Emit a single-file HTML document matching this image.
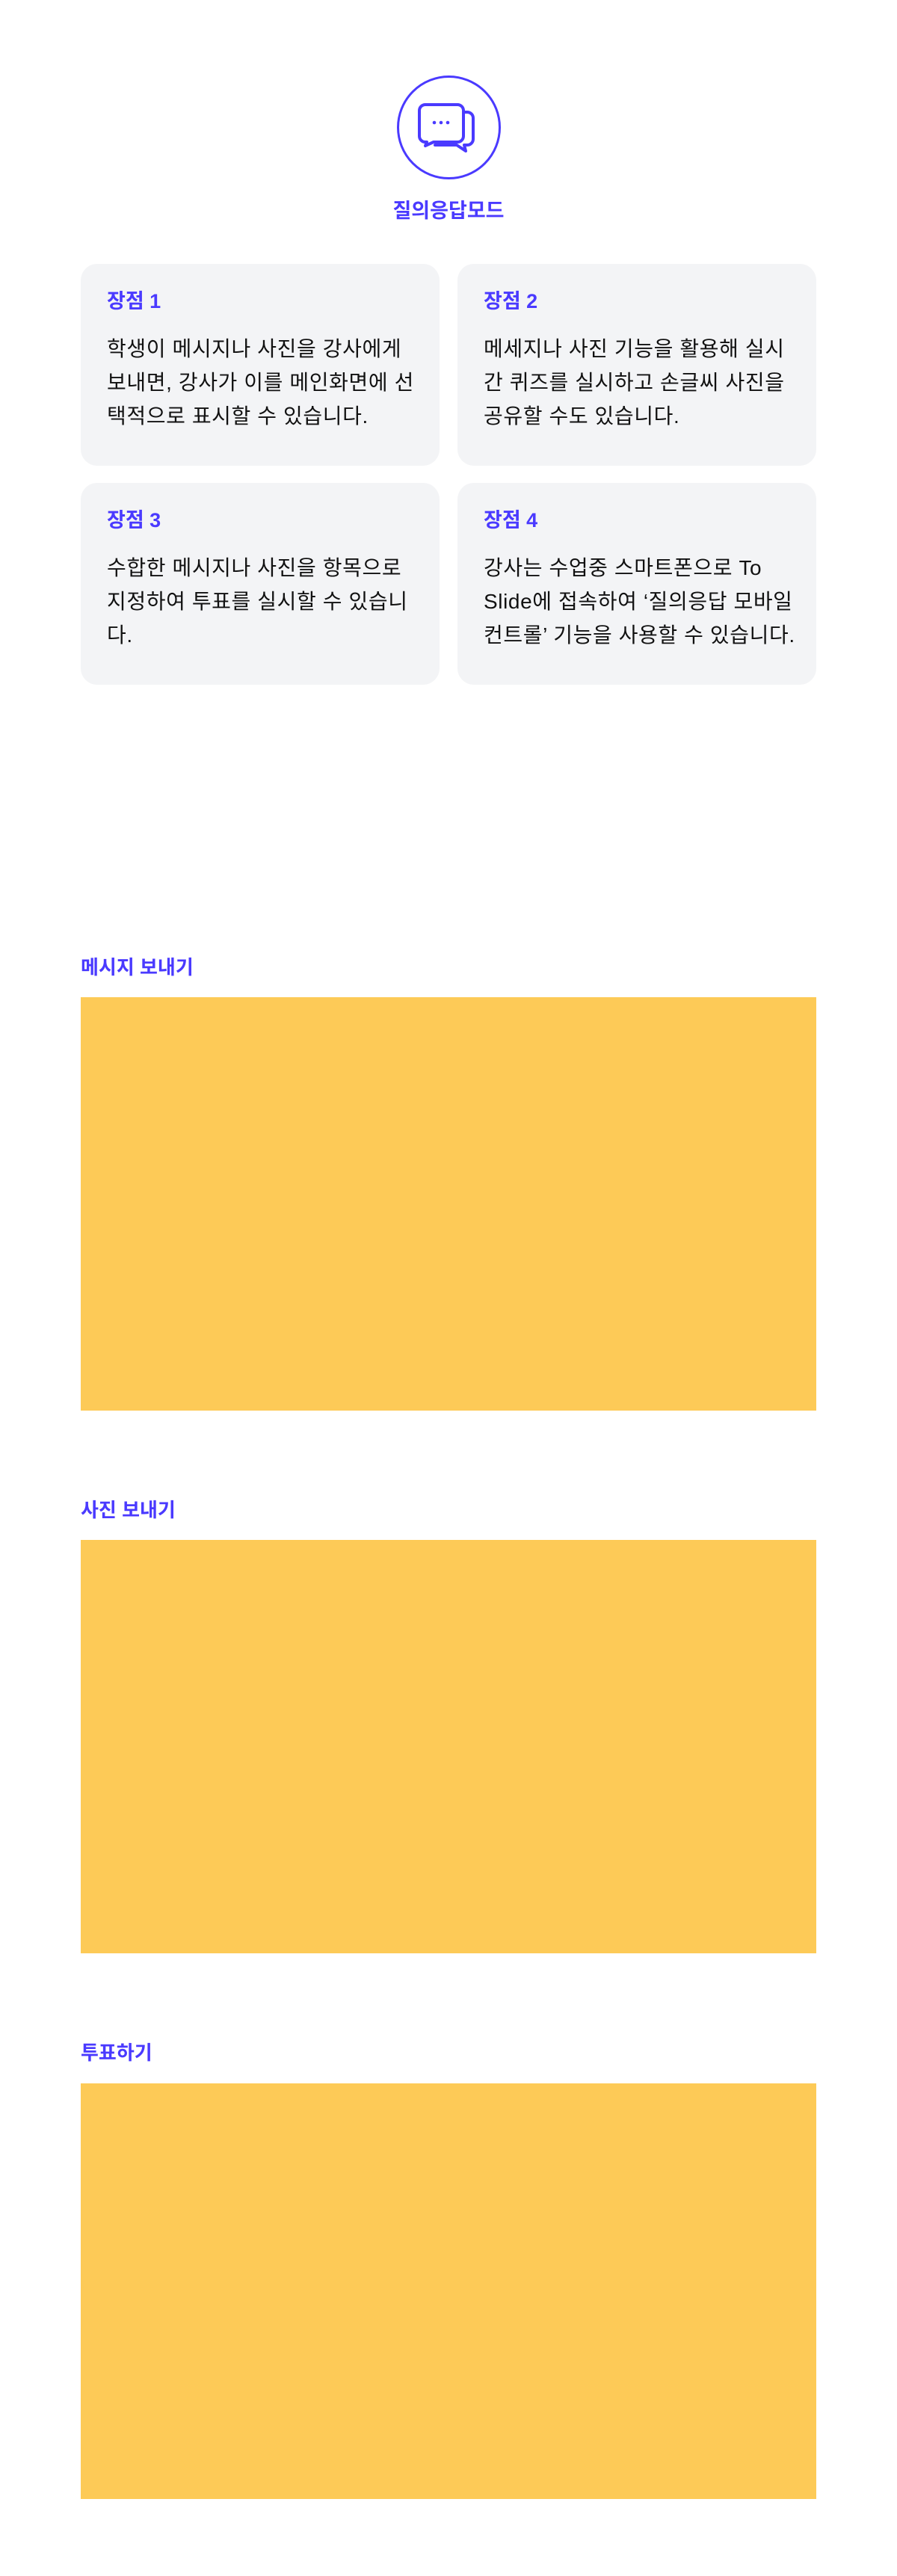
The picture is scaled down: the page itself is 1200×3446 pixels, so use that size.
<!DOCTYPE html>
<html lang="ko"><head><meta charset="utf-8">
<style>
*{margin:0;padding:0;box-sizing:border-box}
html,body{width:1200px;height:3446px;background:#fff;overflow:hidden}
body{position:relative;font-family:"Liberation Sans","Noto Sans CJK KR",sans-serif;color:#111}
.circle{position:absolute;left:531px;top:101px;width:139px;height:139px;border:3px solid #4a3aff;border-radius:50%}
.icon{position:absolute;left:538px;top:120px;width:120px;height:100px}
.title{position:absolute;left:0;width:1200px;top:264px;text-align:center;font-size:27px;font-weight:700;color:#4a3aff;line-height:36px}
.card{position:absolute;width:480px;height:270px;background:#f3f4f6;border-radius:22px;padding:32px 0 0 35px}
.card h3{font-size:27px;font-weight:700;color:#4a3aff;line-height:36px}
.card p{margin-top:23px;font-size:28px;line-height:45px;color:#111;white-space:nowrap;letter-spacing:0.6px}
.label{position:absolute;left:108px;font-size:26px;font-weight:700;color:#4a3aff;line-height:36px}
.box{position:absolute;left:108px;width:984px;height:553px;background:#fdca57}
</style></head><body>
<div class="circle"></div>
<svg class="icon" viewBox="0 0 120 100" fill="none" stroke="#4a3aff" stroke-width="4" stroke-linejoin="round" stroke-linecap="round">
<path d="M82,30 H87 a8,8 0 0 1 8,8 V66 a8,8 0 0 1 -8,8 H83 L85,82 L73,74 H44"/>
<path d="M31,20 H74 a8,8 0 0 1 8,8 V62 a8,8 0 0 1 -8,8 H42 L31,75 L33,70 H31 a8,8 0 0 1 -8,-8 V28 a8,8 0 0 1 8,-8 Z"/>
<circle cx="43" cy="44" r="2.3" fill="#4a3aff" stroke="none"/>
<circle cx="52" cy="44" r="2.3" fill="#4a3aff" stroke="none"/>
<circle cx="61" cy="44" r="2.3" fill="#4a3aff" stroke="none"/>
</svg>
<div class="title">질의응답모드</div>

<div class="card" style="left:108px;top:353px"><h3>장점 1</h3><p>학생이 메시지나 사진을 강사에게<br>보내면, 강사가 이를 메인화면에 선<br>택적으로 표시할 수 있습니다.</p></div>
<div class="card" style="left:612px;top:353px"><h3>장점 2</h3><p>메세지나 사진 기능을 활용해 실시<br>간 퀴즈를 실시하고 손글씨 사진을<br>공유할 수도 있습니다.</p></div>
<div class="card" style="left:108px;top:646px"><h3>장점 3</h3><p>수합한 메시지나 사진을 항목으로<br>지정하여 투표를 실시할 수 있습니<br>다.</p></div>
<div class="card" style="left:612px;top:646px"><h3>장점 4</h3><p>강사는 수업중 스마트폰으로 To<br>Slide에 접속하여 ‘질의응답 모바일<br>컨트롤’ 기능을 사용할 수 있습니다.</p></div>

<div class="label" style="top:1276px">메시지 보내기</div>
<div class="box" style="top:1334px"></div>
<div class="label" style="top:2002px">사진 보내기</div>
<div class="box" style="top:2060px"></div>
<div class="label" style="top:2728px">투표하기</div>
<div class="box" style="top:2787px;height:556px"></div>
</body></html>
